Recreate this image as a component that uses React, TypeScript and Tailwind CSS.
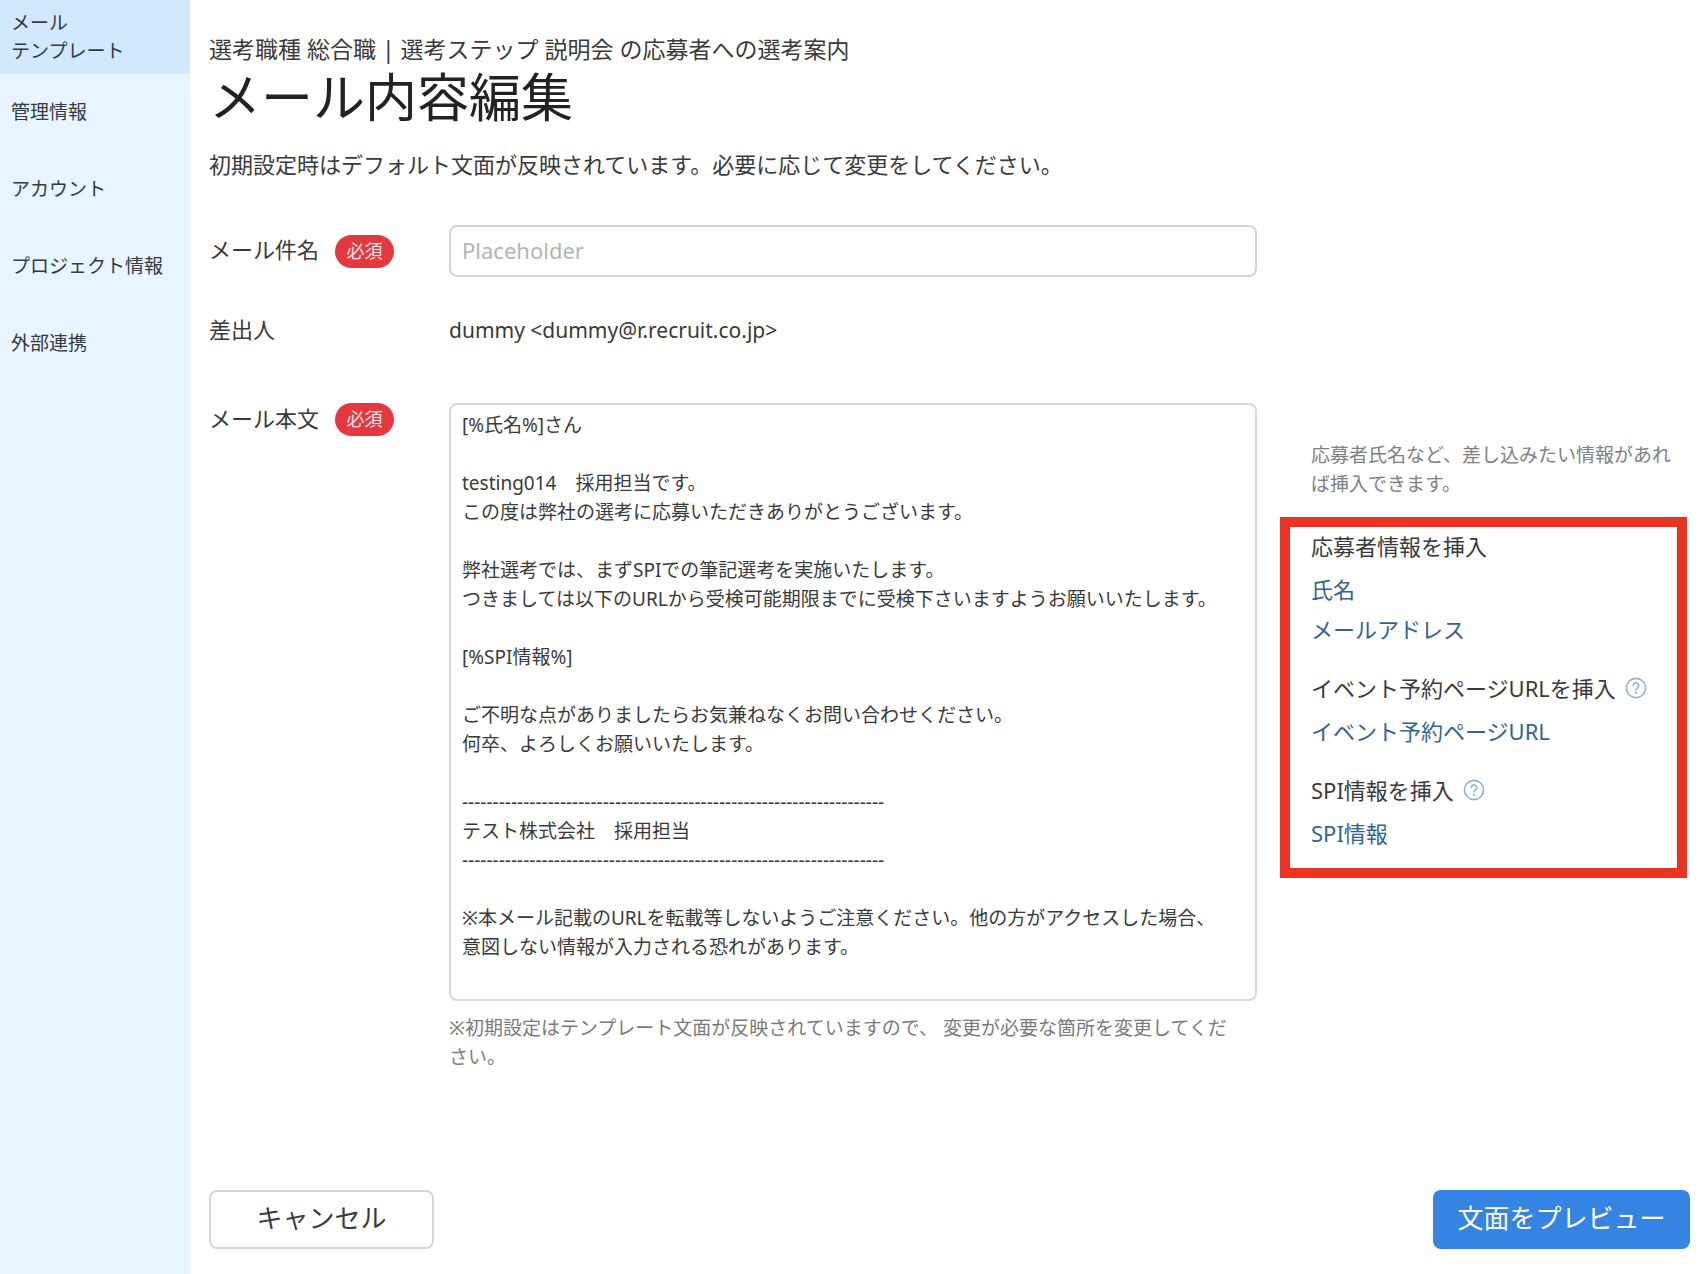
import React from 'react';

interface InsertGroup {
  title: string;
  help: boolean;
  links: string[];
}

const navItems = ['管理情報', 'アカウント', 'プロジェクト情報', '外部連携'];

const insertGroups: InsertGroup[] = [
  { title: '応募者情報を挿入', help: false, links: ['氏名', 'メールアドレス'] },
  { title: 'イベント予約ページURLを挿入', help: true, links: ['イベント予約ページURL'] },
  { title: 'SPI情報を挿入', help: true, links: ['SPI情報'] },
];

const divider = '-'.repeat(69);

const mailBody = `[%氏名%]さん

testing014　採用担当です。
この度は弊社の選考に応募いただきありがとうございます。

弊社選考では、まずSPIでの筆記選考を実施いたします。
つきましては以下のURLから受検可能期限までに受検下さいますようお願いいたします。

[%SPI情報%]

ご不明な点がありましたらお気兼ねなくお問い合わせください。
何卒、よろしくお願いいたします。

${divider}
テスト株式会社　採用担当
${divider}

※本メール記載のURLを転載等しないようご注意ください。他の方がアクセスした場合、
意図しない情報が入力される恐れがあります。`;

const RequiredBadge = () => (
  <span className="flex h-[33px] w-[59px] items-center justify-center rounded-full bg-[#e5383e] text-[18px] text-white/90">
    必須
  </span>
);

const HelpIcon = () => (
  <svg viewBox="0 0 22 22" className="h-[22px] w-[22px]" fill="none" stroke="#8fb3d1" strokeWidth="1.6" strokeLinecap="round">
    <circle cx="11" cy="11" r="9.6" />
    <path d="M8.2 8.6a2.8 2.8 0 1 1 4.4 2.3c-1 .7-1.6 1.1-1.6 2.2" />
    <path d="M11 15.8v.2" strokeWidth="2" />
  </svg>
);

const Sidebar: React.FC = () => (
  <nav className="w-[190px] shrink-0 bg-[#e8f4ff] font-['Noto_Sans_CJK_JP',sans-serif] text-[19px] leading-[28px] text-[#333a42]">
    <a href="#template" className="block bg-[#d1e9ff] pt-2 pb-2.5 pl-[11px]">
      メール
      <br />
      テンプレート
    </a>
    {navItems.map(item => (
      <a key={item} href="#" className="flex h-[77px] items-center pb-[3px] pl-[11px]">
        {item}
      </a>
    ))}
  </nav>
);

const InsertPanel: React.FC = () => (
  <aside className="pt-[38px] pl-[23px]">
    <p className="pr-2 pl-[31px] text-[19px] leading-[29px] text-[#808080]">
      応募者氏名など、差し込みたい情報があれば挿入できます。
    </p>
    <div className="mt-[18px] mr-[3px] border-10 border-[#eb3323] pb-[15px] pl-[21px]">
      {insertGroups.map(group => (
        <section key={group.title} className="mb-5 last:mb-0">
          <div className="mb-1 flex h-[38px] items-center gap-[9px]">
            <h2 className="text-[22px]">{group.title}</h2>
            {group.help && (
              <button type="button" aria-label="ヘルプ">
                <HelpIcon />
              </button>
            )}
          </div>
          {group.links.map(link => (
            <a key={link} href="#" className="flex h-10 items-center text-[22px] text-[#34648f]">
              {link}
            </a>
          ))}
        </section>
      ))}
    </div>
  </aside>
);

export default function App() {
  return (
    <div lang="ja" className="flex min-h-screen bg-white font-['Noto_Sans','Noto_Sans_CJK_JP',sans-serif] text-[#3a3a3a]">
      <Sidebar />

      <main className="flex min-w-0 flex-1 flex-col pt-[33px] pr-4 pb-[25px] pl-[19px]">
        <p className="text-[23px] leading-[32px]">選考職種 総合職 | 選考ステップ 説明会 の応募者への選考案内</p>
        <h1 className="text-[52px] leading-[64px] text-[#222]">メール内容編集</h1>
        <p className="mt-[19px] text-[22px] leading-[32px]">
          初期設定時はデフォルト文面が反映されています。必要に応じて変更をしてください。
        </p>

        <form className="flex flex-1 flex-col">
          <div className="mt-[45px] grid grid-cols-[240px_1fr_433px] text-[22px]">
            <div className="flex h-[52px] items-center gap-4">
              <label htmlFor="subject" className="pb-[3px]">メール件名</label>
              <RequiredBadge />
            </div>
            <input
              id="subject"
              type="text"
              placeholder="Placeholder"
              className="h-[52px] rounded-lg border-2 border-[#d4d4d4] px-[11px] pb-[3px] placeholder:text-[#b4b4b4]"
            />
            <div />

            <div className="mt-[38px] flex h-8 items-center pb-[3px]">差出人</div>
            <div className="mt-[38px] flex h-8 items-center text-[21px]">dummy &lt;dummy@r.recruit.co.jp&gt;</div>
            <div />

            <div className="mt-14 flex h-[33px] items-center gap-4">
              <label htmlFor="body" className="pb-[3px]">メール本文</label>
              <RequiredBadge />
            </div>
            <div className="mt-14">
              <textarea
                id="body"
                defaultValue={mailBody}
                className="block h-[598px] w-full resize-none overflow-hidden rounded-lg border-2 border-[#d3dae0] px-[11px] py-1.5 text-[19px] leading-[29px]"
              />
              <p className="mt-[13px] pr-4 text-[19px] leading-[29px] text-[#7a7a7a]">
                ※初期設定はテンプレート文面が反映されていますので、 変更が必要な箇所を変更してください。
              </p>
            </div>
            <div className="mt-14">
              <InsertPanel />
            </div>
          </div>

          <div className="mt-auto flex justify-between pt-10 text-[26px]">
            <button type="button" className="h-[59px] w-[225px] rounded-lg border-2 border-[#d6d6d6] pb-[3px]">
              キャンセル
            </button>
            <button type="submit" className="h-[59px] w-[257px] rounded-lg bg-[#3584e4] pb-[3px] text-white">
              文面をプレビュー
            </button>
          </div>
        </form>
      </main>
    </div>
  );
}
